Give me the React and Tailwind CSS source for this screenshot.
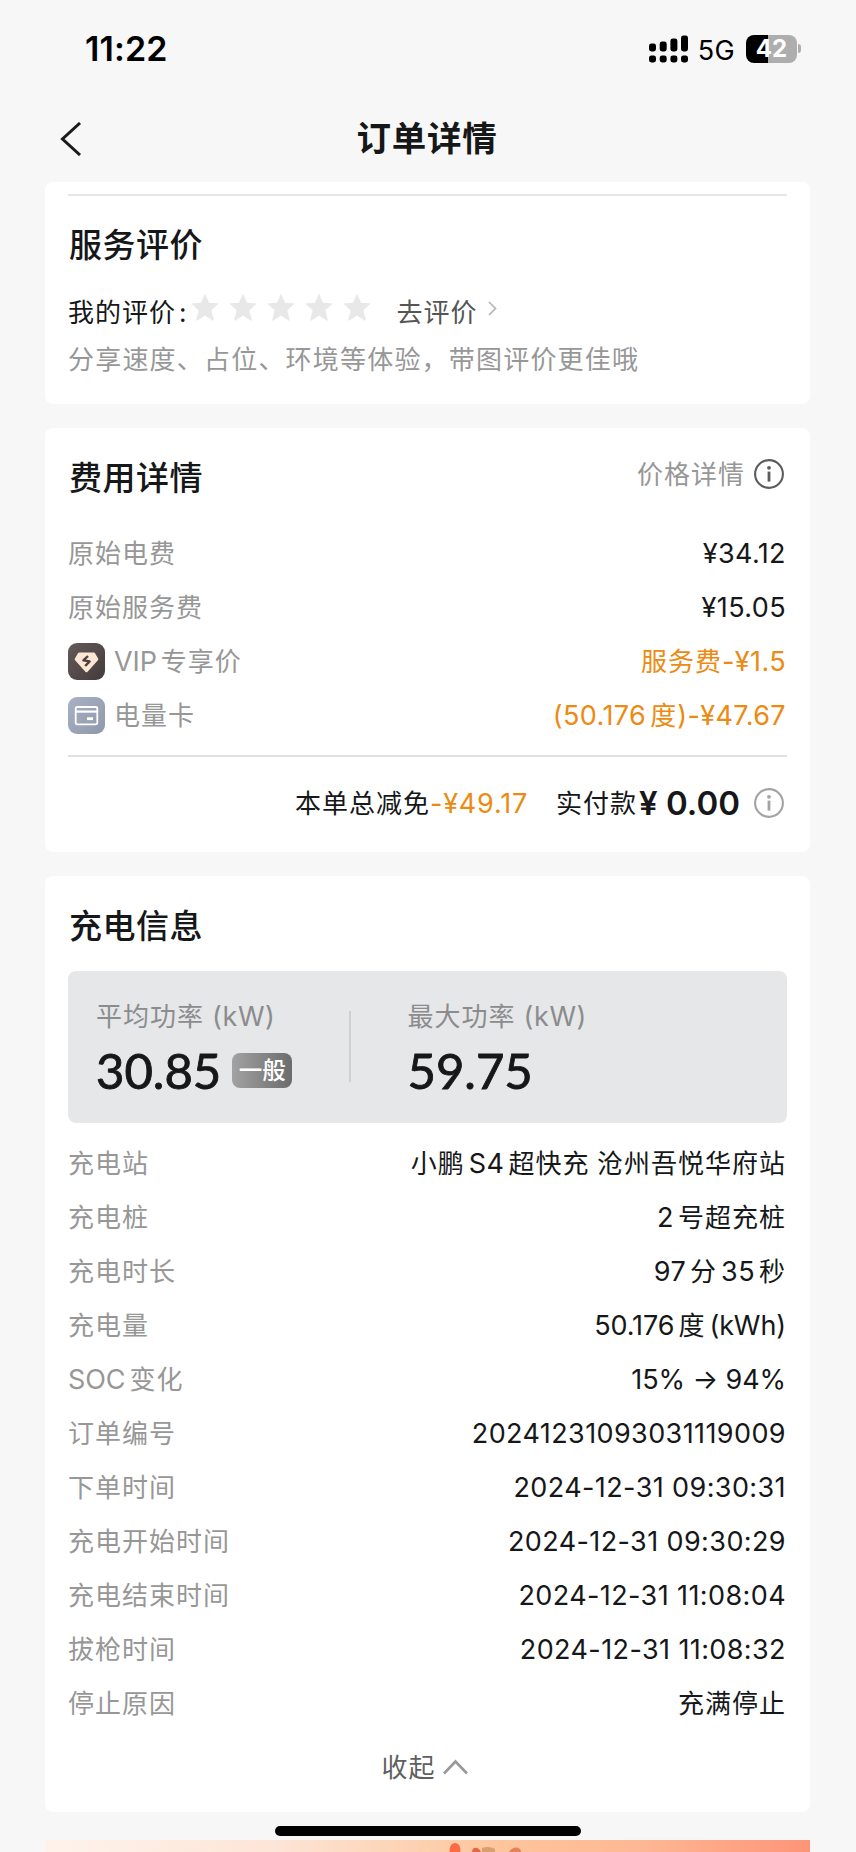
import React from "react";

const chargeRows = [
  { label: "充电站", value: "小鹏 S4 超快充 沧州吾悦华府站", chinese: true },
  { label: "充电桩", value: "2 号超充桩" },
  { label: "充电时长", value: "97 分 35 秒" },
  { label: "充电量", value: "50.176 度 (kWh)", tight: true },
  { label: "SOC 变化", value: "15% → 94%", tight: true },
  { label: "订单编号", value: "20241231093031119009" },
  { label: "下单时间", value: "2024-12-31 09:30:31" },
  { label: "充电开始时间", value: "2024-12-31 09:30:29" },
  { label: "充电结束时间", value: "2024-12-31 11:08:04" },
  { label: "拔枪时间", value: "2024-12-31 11:08:32" },
  { label: "停止原因", value: "充满停止", chinese: true },
];

const feeRows = [
  { label: "原始电费", value: "¥34.12" },
  { label: "原始服务费", value: "¥15.05" },
  { label: "VIP 专享价", value: "服务费-¥1.5", icon: "vip", discount: true },
  { label: "电量卡", value: "(50.176 度)-¥47.67", icon: "card", discount: true },
];

// splits latin runs from chinese ones, a space next to chinese is a thin gap
const MixedText = ({ text, tight }) => {
  const parts = text.match(/[\u4e00-\u9fff]+|[^\u4e00-\u9fff]+/g) || [];
  return parts.map((part, i) =>
    /[\u4e00-\u9fff]/.test(part) ? (
      <span key={i} className="text-[26px] tracking-[1px]">
        {part}
      </span>
    ) : part === " " ? (
      <span key={i}> </span>
    ) : (
      <span
        key={i}
        className={`whitespace-pre ${tight ? "tracking-[-0.1px]" : "tracking-[0.4px]"} ${
          part.startsWith(" ") ? "pl-[4px]" : ""
        } ${part.endsWith(" ") ? "pr-[4px]" : ""}`}
      >
        {part.trim()}
      </span>
    ),
  );
};

const SignalIcon = () => (
  <svg width="39" height="28" viewBox="0 0 39 28" fill="#000">
    <rect x="0" y="8.5" width="7" height="8" rx="2.4" />
    <rect x="10.7" y="6.5" width="7" height="10" rx="2.4" />
    <rect x="21.4" y="3.5" width="7" height="13" rx="2.4" />
    <rect x="32" y="0.5" width="7" height="16" rx="2.4" />
    <rect x="0" y="20.5" width="7" height="7" rx="2.4" />
    <rect x="10.7" y="20.5" width="7" height="7" rx="2.4" />
    <rect x="21.4" y="20.5" width="7" height="7" rx="2.4" />
    <rect x="32" y="20.5" width="7" height="7" rx="2.4" />
  </svg>
);

const InfoIcon = ({ className }) => (
  <svg className={className} width="30" height="30" viewBox="0 0 30 30" fill="none">
    <circle cx="15" cy="15" r="13.9" stroke="currentColor" strokeWidth="2.1" />
    <circle cx="15" cy="8.8" r="1.9" fill="currentColor" />
    <path d="M15 12.6v10" stroke="currentColor" strokeWidth="2.8" />
  </svg>
);

const StarIcon = () => (
  <svg width="28" height="28" viewBox="0 0 28 28" fill="#e8e8e8">
    <path d="M14 0.5l4 9.2 9.8 0.9-7.4 6.6 2.3 9.6a0.8 0.8 0 0 1-1.2 0.8L14 22.6l-7.5 5a0.8 0.8 0 0 1-1.2-0.8l2.3-9.6-7.4-6.6 9.8-0.9z" />
  </svg>
);

const VipIcon = () => (
  <svg width="37" height="37" viewBox="0 0 37 37">
    <defs>
      <linearGradient id="vipBg" x1="0" y1="0" x2="1" y2="1">
        <stop offset="0" stopColor="#665a5a" />
        <stop offset="1" stopColor="#433b3c" />
      </linearGradient>
    </defs>
    <rect width="37" height="37" rx="9" fill="url(#vipBg)" />
    <path
      d="M11.3 9.5h14.4a1.5 1.5 0 0 1 1.2.6l3.2 5.4a1.5 1.5 0 0 1-.2 1.8L19.6 28.7a1.5 1.5 0 0 1-2.2 0L7.1 17.3a1.5 1.5 0 0 1-.2-1.8l3.2-5.4a1.5 1.5 0 0 1 1.2-.6z"
      fill="#fde6d3"
    />
    <path
      d="M20 13l-4.6 4.4 6.2 1-4.4 4.6"
      stroke="#4a4040"
      strokeWidth="2.4"
      fill="none"
      strokeLinejoin="round"
    />
  </svg>
);

const CardIcon = () => (
  <svg width="37" height="37" viewBox="0 0 37 37" fill="none">
    <defs>
      <linearGradient id="cardBg" x1="0" y1="0" x2="1" y2="1">
        <stop offset="0" stopColor="#a9b2c5" />
        <stop offset="1" stopColor="#8f98ab" />
      </linearGradient>
    </defs>
    <rect width="37" height="37" rx="9" fill="url(#cardBg)" />
    <rect x="7.7" y="10" width="21.6" height="17.3" rx="1.5" stroke="#fff" strokeWidth="1.8" />
    <path d="M8 14.6h21" stroke="#fff" strokeWidth="2.2" />
    <rect x="19" y="20.3" width="6" height="2.8" fill="#fff" />
  </svg>
);

const StatusBar = () => (
  <div className="flex h-[97px] items-center justify-between pl-[85px] pr-[55px]">
    <span className="mt-px text-[34px] font-semibold tracking-[0.1px] text-black">11:22</span>
    <div className="flex items-center">
      <SignalIcon />
      <span className="ml-[10px] mt-[3px] text-[27px] tracking-[0.3px] text-black">5G</span>
      <div className="ml-[11px] flex h-[28px] w-[51px] items-center justify-center rounded-[8px] bg-[linear-gradient(90deg,#000_43%,#aeaeae_43%)] pt-px text-[24px] font-bold text-white">
        42
      </div>
      <div className="ml-[1px] h-[9px] w-[3px] rounded-r-full bg-[#aeaeae]" />
    </div>
  </div>
);

const NavBar = () => (
  <div className="flex h-[85px] items-center px-[60px]">
    <svg className="mb-[2px]" width="22" height="34" viewBox="0 0 22 34" fill="none">
      <path d="M20 1L2.5 17L20 33" stroke="#1a1b1d" strokeWidth="3" />
    </svg>
    <h1 className="flex-1 pr-[24px] text-center text-[34.5px] font-bold tracking-[0.8px]">
      订单详情
    </h1>
  </div>
);

const Row = ({ label, value, icon, discount, chinese, tight }) => (
  <div className="flex h-[54px] items-center justify-between">
    <div className={`flex items-center text-[#979797] ${icon ? "" : "mt-px"}`}>
      {icon === "vip" && <VipIcon />}
      {icon === "card" && <CardIcon />}
      <span className={icon ? "ml-[9px]" : ""}>
        <MixedText text={label} tight />
      </span>
    </div>
    <div
      className={`pr-px ${discount ? "text-[#ec8a12]" : ""} ${chinese ? "mt-px" : ""}`}
    >
      <MixedText text={value} tight={tight} />
    </div>
  </div>
);

const ReviewCard = () => (
  <div className="h-[222px] rounded-[8px] bg-white px-[23px] pt-3">
    <div className="h-[1.5px] bg-[#e6e6e6]" />
    <h2 className="mt-[22px] h-[54px] pl-px text-[33px] font-medium leading-[54px] tracking-[0.5px]">
      服务评价
    </h2>
    <div className="mt-[15px] flex h-[48px] items-center">
      <span className="mt-[4px] text-[26px] tracking-[1px]">
        我的评价<span className="pl-[3px]">:</span>
      </span>
      <div className="mb-[7px] ml-[3px] flex gap-[10px]">
        {[1, 2, 3, 4, 5].map((n) => (
          <StarIcon key={n} />
        ))}
      </div>
      <span className="ml-[26px] mt-[4px] text-[26px] tracking-[1px] text-[#555]">去评价</span>
      <svg className="mb-[5px] ml-[10px]" width="9" height="15" viewBox="0 0 9 15" fill="none">
        <path d="M1 1l6.5 6.5L1 14" stroke="#b5b5b5" strokeWidth="1.7" />
      </svg>
    </div>
    <div className="mt-[3px] h-[44px] text-[26px] leading-[44px] tracking-[1.2px] text-[#979797]">
      分享速度、占位、环境等体验，带图评价更佳哦
    </div>
  </div>
);

const FeeCard = () => (
  <div className="mt-6 h-[424px] rounded-[8px] bg-white px-[23px] pt-[20px]">
    <div className="flex h-[60px] items-center justify-between">
      <h2 className="pl-px text-[33px] font-medium tracking-[0.5px]">费用详情</h2>
      <div className="mb-[8px] mr-[3px] flex items-center text-[#979797]">
        <span className="mt-px text-[26px] tracking-[1px]">价格详情</span>
        <InfoIcon className="ml-[9px] text-[#5c5c5c]" />
      </div>
    </div>
    <div className="mt-[18px]">
      {feeRows.map((row) => (
        <Row key={row.label} {...row} />
      ))}
    </div>
    <div className="mt-[13px] h-[1.5px] bg-[#e1e1e1]" />
    <div className="mr-[3px] mt-[20px] flex h-[52px] items-center justify-end">
      <span className="mt-[2px] text-[26px] tracking-[1px]">本单总减免</span>
      <span className="mt-px tracking-[0.8px] text-[#ec8a12]">-¥49.17</span>
      <span className="ml-[28px] mt-[2px] text-[26px] tracking-[1px]">实付款</span>
      <span className="ml-[2px] mt-px text-[33px] font-semibold">¥ 0.00</span>
      <InfoIcon className="ml-[14px] text-[#a3a3a3]" />
    </div>
  </div>
);

const PowerValue = ({ children }) => (
  <span className="font-[Lato] text-[49px] [-webkit-text-stroke:0.9px_currentColor]">
    {children}
  </span>
);

const PowerPanel = () => (
  <div className="flex h-[152px] rounded-[8px] bg-[#e6e7e9] pl-[28px] pt-[25px]">
    <div className="w-[253px]">
      <div className="h-[41px] leading-[42px] text-[#8c8c8e]">
        <MixedText text="平均功率" />
        <span className="pl-[8px] tracking-[0.6px]">(kW)</span>
      </div>
      <div className="flex h-[66px] items-center">
        <PowerValue>30.85</PowerValue>
        <span className="ml-[11px] flex h-[35px] w-[60px] items-center justify-center rounded-[8px] bg-linear-to-r from-[#a2a2a2] to-[#6c6c6c] pt-px text-[23.5px] font-medium text-white">
          一般
        </span>
      </div>
    </div>
    <div className="mt-[15px] h-[71px] w-[1.5px] bg-[#cfd0d2]" />
    <div className="ml-[57px]">
      <div className="h-[41px] leading-[42px] text-[#8c8c8e]">
        <MixedText text="最大功率" />
        <span className="pl-[8px] tracking-[0.6px]">(kW)</span>
      </div>
      <div className="flex h-[66px] items-center">
        <PowerValue>59.75</PowerValue>
      </div>
    </div>
  </div>
);

const ChargeCard = () => (
  <div className="mt-6 h-[936px] rounded-[8px] bg-white px-[23px] pt-[20px]">
    <h2 className="h-[60px] pl-px text-[33px] font-medium leading-[60px] tracking-[0.5px]">
      充电信息
    </h2>
    <div className="mt-[15px]">
      <PowerPanel />
    </div>
    <div className="mt-[13px]">
      {chargeRows.map((row) => (
        <Row key={row.label} {...row} />
      ))}
    </div>
    <div className="mt-[16px] flex h-[44px] items-center justify-center pr-[6px] text-[#5f5f5f]">
      <span className="text-[26px] tracking-[1px]">收起</span>
      <svg className="mb-[3px] ml-[7px]" width="25" height="16" viewBox="0 0 25 16" fill="none">
        <path d="M1 14.5L12.5 2.5L24 14.5" stroke="#999" strokeWidth="2.6" />
      </svg>
    </div>
  </div>
);

const Banner = () => (
  <div className="mt-[28px] h-[12px] overflow-hidden bg-[linear-gradient(90deg,#fef3ec_0%,#fde5d7_30%,#fdd0ae_50%,#fec59c_60%,#feb794_78%,#fe9478_100%)]">
    <svg width="765" height="12" viewBox="0 0 765 12">
      <ellipse cx="410" cy="10" rx="5.5" ry="7" fill="#fb6c45" />
      <path d="M427 12c0-5 6-6 9 0z" fill="#e0673f" />
      <path d="M437 12v-4c4-2 10-1 13 1v3z" fill="#d9a06c" />
      <path d="M464 12c3-6 12-6 12 0z" fill="#e58257" />
    </svg>
  </div>
);

const App = () => {
  return (
    <div className="relative h-[1852px] w-[856px] overflow-hidden bg-[#f7f7f7] font-[Inter,'Noto_Sans_CJK_SC',sans-serif] text-[27px] leading-none text-[#161719]">
      <StatusBar />
      <NavBar />
      <main className="ml-[45px] w-[765px]">
        <ReviewCard />
        <FeeCard />
        <ChargeCard />
        <Banner />
      </main>
      {/* home indicator floats over the page */}
      <div className="absolute bottom-[16px] left-[275px] h-[10px] w-[306px] rounded-full bg-black" />
    </div>
  );
};

export default App;
